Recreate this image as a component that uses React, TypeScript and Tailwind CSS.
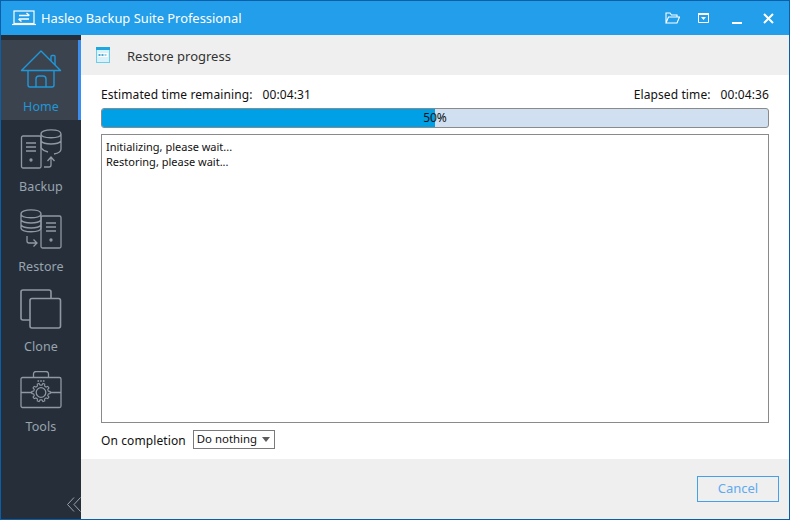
import React from "react";

const Stroke = "#8f98a3";

function HomeIcon() {
  return (
    <svg width="42" height="42" viewBox="0 0 42 42" fill="none" stroke="#2196d8" strokeWidth="1.4">
      <path d="M1.5 20.5 L21 1 L40.5 20.5 Z" strokeLinejoin="round" />
      <path d="M31 11 V6.5 a1 1 0 0 1 1 -1 h2 a1 1 0 0 1 1 1 V15" />
      <path d="M8 20.5 V35 a2 2 0 0 0 2 2 H32 a2 2 0 0 0 2 -2 V20.5" />
      <path d="M16 37 V29 a3 3 0 0 1 3 -3 h4 a3 3 0 0 1 3 3 V37" />
    </svg>
  );
}
function BackupIcon() {
  return (
    <svg width="42" height="42" viewBox="0 0 42 42" fill="none" stroke={Stroke} strokeWidth="1.3">
      <rect x="1.5" y="7" width="19.5" height="32" rx="1.5" />
      <path d="M6 14 H16 M6 18 H16 M6 22 H16" />
      <circle cx="11" cy="31" r="1" fill={Stroke} />
      <path d="M21 5 C21 -0.5 41 -0.5 41 5 V20 C41 23 37 24.5 34 25 M21 5 C21 10 41 10 41 5 M21 12 C24 16 38 16 41 12 M21 19 C23 21.5 25 22.5 28 23 M21 5 V19" />
      <path d="M24 38 H29 a2 2 0 0 0 2 -2 V28 M27.5 32 L31 28 L34.5 32" />
    </svg>
  );
}
function RestoreIcon() {
  return (
    <svg width="42" height="42" viewBox="0 0 42 42" fill="none" stroke={Stroke} strokeWidth="1.3">
      <rect x="21" y="7" width="20" height="32" rx="1.5" />
      <path d="M26 14 H36 M26 18 H36 M26 22 H36" />
      <circle cx="31" cy="31" r="1" fill={Stroke} />
      <path d="M1 5 C1 -0.5 21 -0.5 21 5 V19 C21 24 1 24 1 19 Z M1 5 C1 10 21 10 21 5 M1 11 C4 15 18 15 21 11 M1 16 C4 20 18 20 21 16" />
      <path d="M7 27 V32 a2 2 0 0 0 2 2 H17 M13.5 30.5 L17 34 L13.5 37.5" />
    </svg>
  );
}
function CloneIcon() {
  return (
    <svg width="42" height="42" viewBox="0 0 42 42" fill="none" stroke={Stroke} strokeWidth="1.6">
      <path d="M10 31 H3 a2 2 0 0 1 -2 -2 V3 a2 2 0 0 1 2 -2 H29 a2 2 0 0 1 2 2 V9.5" />
      <rect x="10" y="9.5" width="30.5" height="29.5" rx="2" />
    </svg>
  );
}
function gearPath(cx: number, cy: number, rIn: number, rOut: number, teeth: number) {
  const pts: string[] = [];
  const step = (Math.PI * 2) / teeth;
  for (let i = 0; i < teeth; i++) {
    const a = i * step;
    const offs: [number, number][] = [
      [-0.3, rIn],
      [-0.17, rOut],
      [0.17, rOut],
      [0.3, rIn],
    ];
    for (const [o, r] of offs) {
      const t = a + o * step;
      pts.push(`${(cx + r * Math.cos(t)).toFixed(2)} ${(cy + r * Math.sin(t)).toFixed(2)}`);
    }
  }
  return `M${pts.join(" L")} Z`;
}
function ToolsIcon() {
  return (
    <svg width="42" height="38" viewBox="0 0 42 38" fill="none" stroke={Stroke} strokeWidth="1.3">
      <path d="M13.5 6 V3 a2.5 2.5 0 0 1 2.5 -2.5 h10 a2.5 2.5 0 0 1 2.5 2.5 V6" />
      <rect x="1" y="6.5" width="40" height="30" rx="1.5" />
      <path d="M1 21.5 H12 M30 21.5 H41" />
      <circle cx="21" cy="21.5" r="4.8" />
      <path d={gearPath(21, 21.5, 7.4, 9.2, 10)} strokeWidth="1.1" />
      <path d="M17.5 10 h1.6 M20.2 10 h1.6 M22.9 10 h1.6" />
    </svg>
  );
}

function NavItem({ icon, label, active }: { icon: React.ReactNode; label: string; active?: boolean }) {
  return (
    <div className={active ? "relative flex h-20 flex-col items-center bg-[#3b444e] pt-[9px]" : "relative flex h-20 flex-col items-center pt-[8px]"}>
      <div className="flex h-[44px] items-center justify-center">{icon}</div>
      <span className={active ? "mt-[5px] text-[12.5px] leading-[18px] text-[#2196d8]" : "mt-[6px] text-[12.5px] leading-[18px] text-[#98a4b0]"}>{label}</span>
      {active && <div className="absolute right-0 top-0 h-full w-[3px] bg-[#3b8ef0]" />}
    </div>
  );
}

export default function App() {
  return (
    <div className="flex h-[520px] w-[790px] flex-col overflow-hidden border border-[#0a5fa8] bg-white text-[12px] tracking-[0.1px] text-[#111] [font-family:'Noto_Sans',sans-serif]">
      <header className="flex h-[34px] shrink-0 items-center bg-[#229eea] text-white">
        <svg className="ml-[11px]" width="24" height="16" viewBox="0 0 24 16" fill="none" stroke="white" strokeWidth="1.2">
          <rect x="2" y="1" width="20" height="12.5" />
          <path d="M0 14.5 H24" />
          <path d="M7 5.5 H17 M7 9 H17" strokeWidth="1.4" />
          <path d="M14.5 3 L17.5 5.5 M9.5 11.5 L6.5 9" strokeWidth="1.4" />
        </svg>
        <span className="ml-[5px] mt-[1px] text-[12.9px] tracking-normal">Hasleo Backup Suite Professional</span>
        <div className="ml-auto flex items-center">
          <svg width="15" height="12" viewBox="0 0 15 12" fill="none" stroke="white" strokeWidth="1.1">
            <path d="M1 11 V1 H5 L6.5 3 H12 V5 M1 11 L3.5 5 H14.5 L12 11 Z" />
          </svg>
          <svg className="ml-[18px]" width="11" height="10" viewBox="0 0 11 10">
            <path d="M0.5 0.5 H10.5 V9.5 H0.5 Z" fill="none" stroke="white" />
            <path d="M0 0 H11 V2 H0 Z M3 4 H8 L5.5 7 Z" fill="white" />
          </svg>
          <div className="ml-[23px] mt-[10px] h-[2px] w-[10px] bg-white" />
          <svg className="ml-[21px] mr-[15px]" width="11" height="11" viewBox="0 0 11 11" stroke="white" strokeWidth="2">
            <path d="M1 1 L10 10 M10 1 L1 10" />
          </svg>
        </div>
      </header>
      <div className="flex min-h-0 flex-1">
        <aside className="flex w-[80px] shrink-0 flex-col bg-[#262f39] pt-[5px]">
          <NavItem icon={<HomeIcon />} label="Home" active />
          <NavItem icon={<BackupIcon />} label="Backup" />
          <NavItem icon={<RestoreIcon />} label="Restore" />
          <NavItem icon={<CloneIcon />} label="Clone" />
          <NavItem icon={<ToolsIcon />} label="Tools" />
          <div className="mt-auto flex justify-end pb-[7px]">
            <svg width="14" height="15" viewBox="0 0 14 15" fill="none" stroke="#9aa3ad" strokeWidth="1">
              <path d="M7 0.5 L0.5 7.5 L7 14.5 M13.5 0.5 L7 7.5 L13.5 14.5" />
            </svg>
          </div>
        </aside>
        <main className="flex min-w-0 flex-1 flex-col">
          <div className="flex h-[40px] shrink-0 items-center bg-[#efefef] pl-[15px]">
            <svg width="14" height="16" viewBox="0 0 14 16">
              <rect x="0.5" y="0.5" width="13" height="15" fill="#d8f1fa" stroke="#6dcdec" />
              <rect x="0" y="0" width="14" height="3" fill="#1ea7de" />
              <rect x="2" y="6" width="10" height="4" fill="#ffffff" />
              <rect x="2.5" y="7" width="2" height="2" fill="#4aa8d8" />
              <rect x="5.5" y="7" width="2" height="2" fill="#4aa8d8" />
              <rect x="8.5" y="7" width="2" height="2" fill="#9ad0e8" />
            </svg>
            <span className="ml-[17px] mt-[4px] text-[13px] tracking-normal text-[#333]">Restore progress</span>
          </div>
          <div className="flex min-h-0 flex-1 flex-col px-[20px] pt-[11px]">
            <div className="flex h-[18px] items-center justify-between">
              <div>Estimated time remaining:<span className="ml-[10px]">00:04:31</span></div>
              <div>Elapsed time:<span className="ml-[10px]">00:04:36</span></div>
            </div>
            <div className="relative mt-[4px] h-[20px] overflow-hidden rounded-[3px] border border-[#8a8a8a] bg-[#d0e0f0]">
              <div className="h-full w-[50%] bg-[#00a0e6]" />
              <span className="absolute inset-0 flex items-center justify-center tracking-normal">50%</span>
            </div>
            <div className="mt-[6px] h-[289px] shrink-0 border border-[#8a8a8a] px-[4px] pb-[4px] pt-[4px] text-[11px] leading-[15px] tracking-normal">
              <div>Initializing, please wait...</div>
              <div>Restoring, please wait...</div>
            </div>
            <div className="mt-[6px] flex h-[20px] items-center">
              <span className="mt-[3px]">On completion</span>
              <div className="ml-[7px] flex h-[19px] w-[82px] items-center border border-[#7a7a7a] pl-[3px] text-[11.4px] tracking-normal">
                <span className="whitespace-nowrap">Do nothing</span>
                <svg className="ml-[5px]" width="8" height="5" viewBox="0 0 8 5"><path d="M0 0 H8 L4 5 Z" fill="#5c5c5c" /></svg>
              </div>
            </div>
          </div>
          <div className="flex h-[60px] shrink-0 items-start justify-end bg-[#efefef] pr-[10px] pt-[17px]">
            <div className="flex h-[26px] w-[82px] items-center justify-center border border-[#45a0e8] text-[13px] tracking-normal text-[#60aaf0]">Cancel</div>
          </div>
        </main>
      </div>
    </div>
  );
}
